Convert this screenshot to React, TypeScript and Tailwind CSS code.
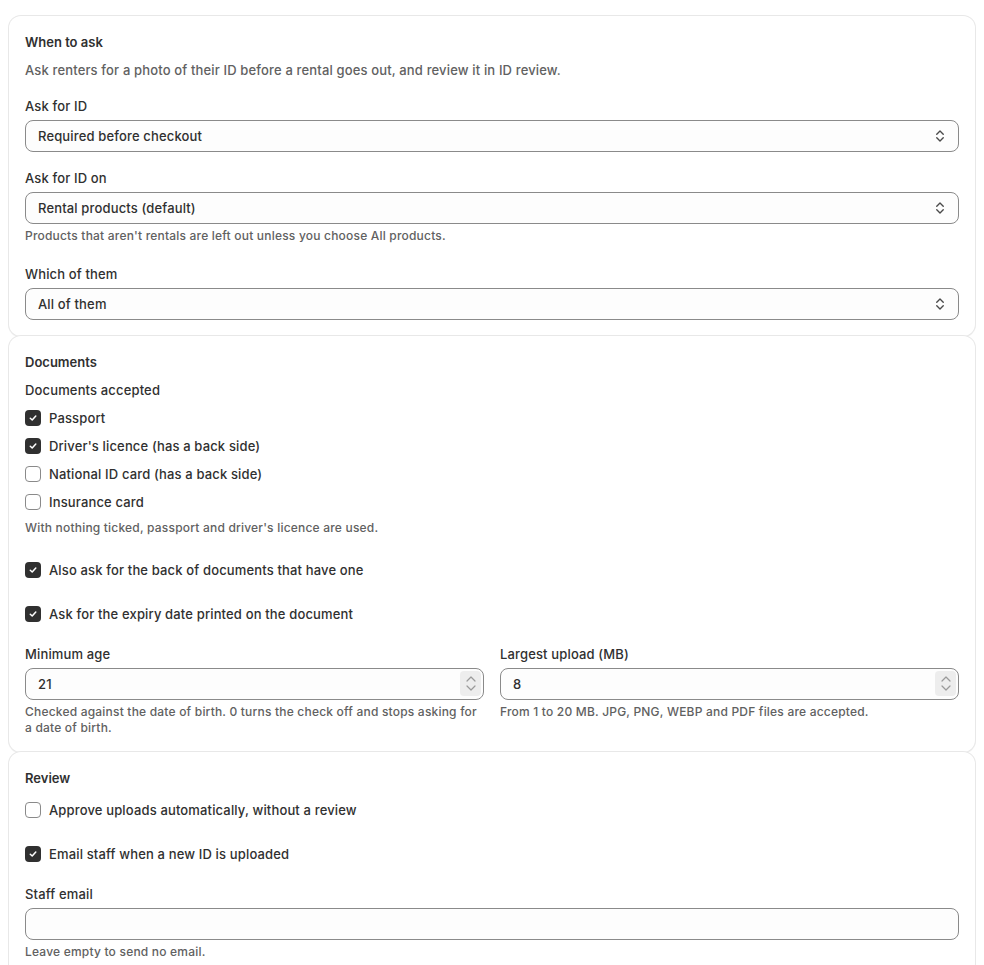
import { useState } from "react";

function SelectIcon() {
  return (
    <svg width="10" height="14" viewBox="0 0 10 14" fill="none" className="pointer-events-none absolute top-1/2 right-[13px] -translate-y-1/2">
      <path d="M1.75 5.25 5 2l3.25 3.25" stroke="#4a4a4a" strokeWidth="1.4" strokeLinecap="round" strokeLinejoin="round" />
      <path d="M1.75 8.75 5 12l3.25-3.25" stroke="#4a4a4a" strokeWidth="1.4" strokeLinecap="round" strokeLinejoin="round" />
    </svg>
  );
}

function Select({ value }: { value: string }) {
  return (
    <div className="relative h-8 w-full rounded-lg border border-[#8a8a8a] bg-[#fdfdfd]">
      <div className="flex h-full items-center pl-3 text-[13px] text-[#303030]">{value}</div>
      <SelectIcon />
    </div>
  );
}

function NumberInput({ value }: { value: string }) {
  return (
    <div className="relative h-8 w-full rounded-lg border border-[#8a8a8a] bg-[#fdfdfd]">
      <div className="flex h-full items-center pl-3 text-[13px] text-[#303030]">{value}</div>
      <div className="absolute top-[2px] right-[2px] flex h-[25px] w-[21px] flex-col items-center justify-center gap-[3px] rounded-[4px] bg-[#ededed]">
        <svg width="10" height="6" viewBox="0 0 10 6" fill="none">
          <path d="M1 5 5 1l4 4" stroke="#9a9a9a" strokeWidth="1.2" strokeLinecap="round" strokeLinejoin="round" />
        </svg>
        <svg width="10" height="6" viewBox="0 0 10 6" fill="none">
          <path d="M1 1l4 4 4-4" stroke="#9a9a9a" strokeWidth="1.2" strokeLinecap="round" strokeLinejoin="round" />
        </svg>
      </div>
    </div>
  );
}

function Checkbox({ label, initial }: { label: string; initial: boolean }) {
  const [checked, setChecked] = useState(initial);
  return (
    <label className="flex h-5 cursor-pointer items-center gap-2 text-[13px] text-[#303030]" onClick={() => setChecked(!checked)}>
      {checked ? (
        <span className="flex h-4 w-4 items-center justify-center rounded-[4px] bg-[#303030]">
          <svg width="10" height="10" viewBox="0 0 10 10" fill="none">
            <path d="M2.3 5.2 4.2 7 7.8 3" stroke="#fff" strokeWidth="1.5" strokeLinecap="round" strokeLinejoin="round" />
          </svg>
        </span>
      ) : (
        <span className="h-4 w-4 rounded-[4px] border border-[#8a8a8a] bg-white" />
      )}
      <span>{label}</span>
    </label>
  );
}

function Label({ children }: { children: React.ReactNode }) {
  return <p className="text-[13px] leading-5 text-[#303030]">{children}</p>;
}

function Help({ children }: { children: React.ReactNode }) {
  return <p className="mt-1 text-[12px] leading-4 tracking-[0.2px] text-[#616161]">{children}</p>;
}

function Card({ children }: { children: React.ReactNode }) {
  return (
    <section className="rounded-xl bg-white p-4 shadow-[0_0_0_1px_#e8e8e8,0_1px_0_1px_rgba(0,0,0,0.03)]">
      {children}
    </section>
  );
}

export default function App() {
  return (
    <div className="min-h-screen bg-white px-[9px] pt-4 font-['Inter',sans-serif] text-[13px] leading-5 font-[450] tracking-[0.15px] text-[#303030]">
      <Card>
        <h2 className="text-[13px] font-semibold leading-5 tracking-normal">When to ask</h2>
        <p className="mt-2 text-[13px] leading-5 text-[#616161]">
          Ask renters for a photo of their ID before a rental goes out, and review it in ID review.
        </p>
        <div className="mt-4">
          <Label>Ask for ID</Label>
          <div className="mt-1">
            <Select value="Required before checkout" />
          </div>
        </div>
        <div className="mt-4">
          <Label>Ask for ID on</Label>
          <div className="mt-1">
            <Select value="Rental products (default)" />
          </div>
          <Help>Products that aren't rentals are left out unless you choose All products.</Help>
        </div>
        <div className="mt-5">
          <Label>Which of them</Label>
          <div className="mt-1">
            <Select value="All of them" />
          </div>
        </div>
      </Card>

      <Card>
        <h2 className="text-[13px] font-semibold leading-5 tracking-normal">Documents</h2>
        <div className="mt-2 flex flex-col gap-2">
          <Label>Documents accepted</Label>
          <Checkbox label="Passport" initial />
          <Checkbox label="Driver's licence (has a back side)" initial />
          <Checkbox label="National ID card (has a back side)" initial={false} />
          <Checkbox label="Insurance card" initial={false} />
        </div>
        <p className="mt-2 text-[12px] leading-4 tracking-[0.2px] text-[#616161]">
          With nothing ticked, passport and driver's licence are used.
        </p>
        <div className="mt-6">
          <Checkbox label="Also ask for the back of documents that have one" initial />
        </div>
        <div className="mt-6">
          <Checkbox label="Ask for the expiry date printed on the document" initial />
        </div>
        <div className="mt-5 grid grid-cols-2 gap-4">
          <div>
            <Label>Minimum age</Label>
            <div className="mt-1">
              <NumberInput value="21" />
            </div>
            <Help>Checked against the date of birth. 0 turns the check off and stops asking for a date of birth.</Help>
          </div>
          <div>
            <Label>Largest upload (MB)</Label>
            <div className="mt-1">
              <NumberInput value="8" />
            </div>
            <Help>From 1 to 20 MB. JPG, PNG, WEBP and PDF files are accepted.</Help>
          </div>
        </div>
      </Card>

      <Card>
        <h2 className="text-[13px] font-semibold leading-5 tracking-normal">Review</h2>
        <div className="mt-3">
          <Checkbox label="Approve uploads automatically, without a review" initial={false} />
        </div>
        <div className="mt-6">
          <Checkbox label="Email staff when a new ID is uploaded" initial />
        </div>
        <div className="mt-5">
          <Label>Staff email</Label>
          <div className="mt-1 h-8 w-full rounded-lg border border-[#8a8a8a] bg-[#fdfdfd]" />
          <Help>Leave empty to send no email.</Help>
        </div>
      </Card>
    </div>
  );
}
